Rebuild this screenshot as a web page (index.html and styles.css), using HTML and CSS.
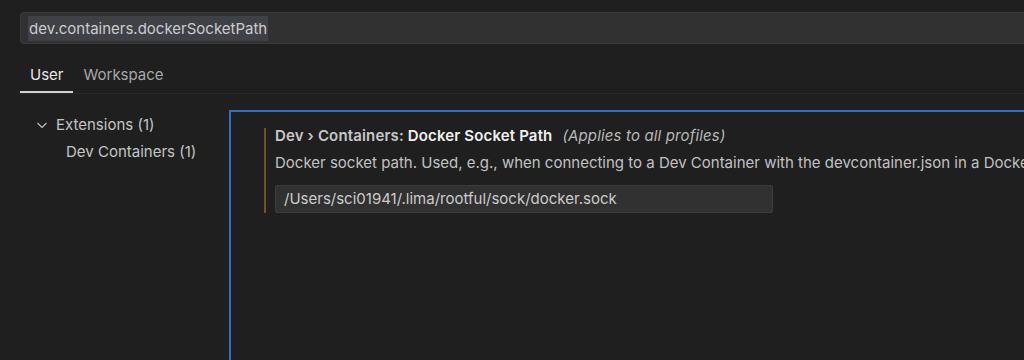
FILE: index.html
```html
<!DOCTYPE html>
<html lang="en">
<head>
  <meta charset="UTF-8" />
  <title>Settings</title>
  <link rel="stylesheet" href="styles.css">
</head>
<body>

  <div class="search">
    <span class="query">dev.containers.dockerSocketPath</span>
  </div>

  <div class="tabs">
    <div class="tab active">User</div>
    <div class="tab">Workspace</div>
  </div>

  <div class="main">
    <div class="tree">
      <div class="tree-row">
        <svg class="chevron" width="12" height="12" viewBox="0 0 12 12">
          <path d="M1.5 4 L6 8.5 L10.5 4" fill="none" stroke="#c5c5c5" stroke-width="1.1"/>
        </svg>
        <span>Extensions (1)</span>
      </div>
      <div class="tree-row child">Dev Containers (1)</div>
    </div>

    <div class="panel">
      <div class="setting">
        <div class="title">
          <span class="category">Dev › Containers: </span><span class="name">Docker Socket Path</span>
          <span class="scope">(Applies to all profiles)</span>
        </div>
        <div class="desc">Docker socket path. Used, e.g., when connecting to a Dev Container with the devcontainer.json in a Docker Compose file.</div>
        <div class="value">/Users/sci01941/.lima/rootful/sock/docker.sock</div>
      </div>
    </div>
  </div>

</body>
</html>
```

FILE: styles.css
```css
* {
  margin: 0;
  padding: 0;
  box-sizing: border-box;
}

body, html {
  height: 100%;
  overflow: hidden;
}

body {
  background-color: #1f1f1f;
  font-family: Inter, 'Noto Sans', sans-serif;
  font-size: 15px;
  color: #cccccc;
}

.search {
  margin: 12px 0 0 20px;
  height: 32px;
  background-color: #313131;
  border: 1px solid #3a3a3a;
  border-right: none;
  border-radius: 4px 0 0 4px;
  padding-left: 7px;
  display: flex;
  align-items: center;
}

.query {
  background-color: #3f4146;
  color: #cccccc;
  font-size: 15px;
  line-height: 25px;
  padding: 0 1px;
}

.tabs {
  display: flex;
  margin: 14px 0 0 20px;
  border-bottom: 1px solid #2b2b2b;
}

.tab {
  line-height: 33px;
  padding: 0 10px;
  color: #a8a8a8;
  border-bottom: 2px solid transparent;
}

.tab.active {
  color: #e7e7e7;
  border-bottom-color: #d0d0d0;
}

.main {
  display: flex;
  margin-top: 16px;
  height: 260px;
}

.tree {
  width: 229px;
  flex-shrink: 0;
  padding: 1px 0 0 36px;
  color: #c5c5c5;
}

.tree-row {
  display: flex;
  align-items: center;
  gap: 8px;
  height: 27px;
  white-space: nowrap;
}

.tree-row.child {
  padding-left: 30px;
}

.panel {
  flex: 1;
  min-width: 0;
  border-top: 2px solid #2f6fcb;
  border-left: 2px solid #2f6fcb;
  padding: 16px 0 0 33px;
  overflow: hidden;
}

.setting {
  border-left: 2px solid #6a5528;
  padding-left: 9px;
  white-space: nowrap;
}

.title {
  line-height: 16px;
  font-weight: 600;
  color: #c8c8c8;
  letter-spacing: 0.15px;
}

.name {
  color: #f0f0f0;
}

.scope {
  font-weight: 400;
  font-style: italic;
  color: #b8b8b8;
  margin-left: 6px;
}

.desc {
  margin-top: 10px;
  line-height: 18px;
  color: #c2c2c2;
}

.value {
  margin-top: 13px;
  width: 498px;
  height: 28px;
  line-height: 26px;
  padding-left: 8px;
  background-color: #313131;
  border: 1px solid #3c3c3c;
  border-radius: 2px;
  color: #cccccc;
}
```
